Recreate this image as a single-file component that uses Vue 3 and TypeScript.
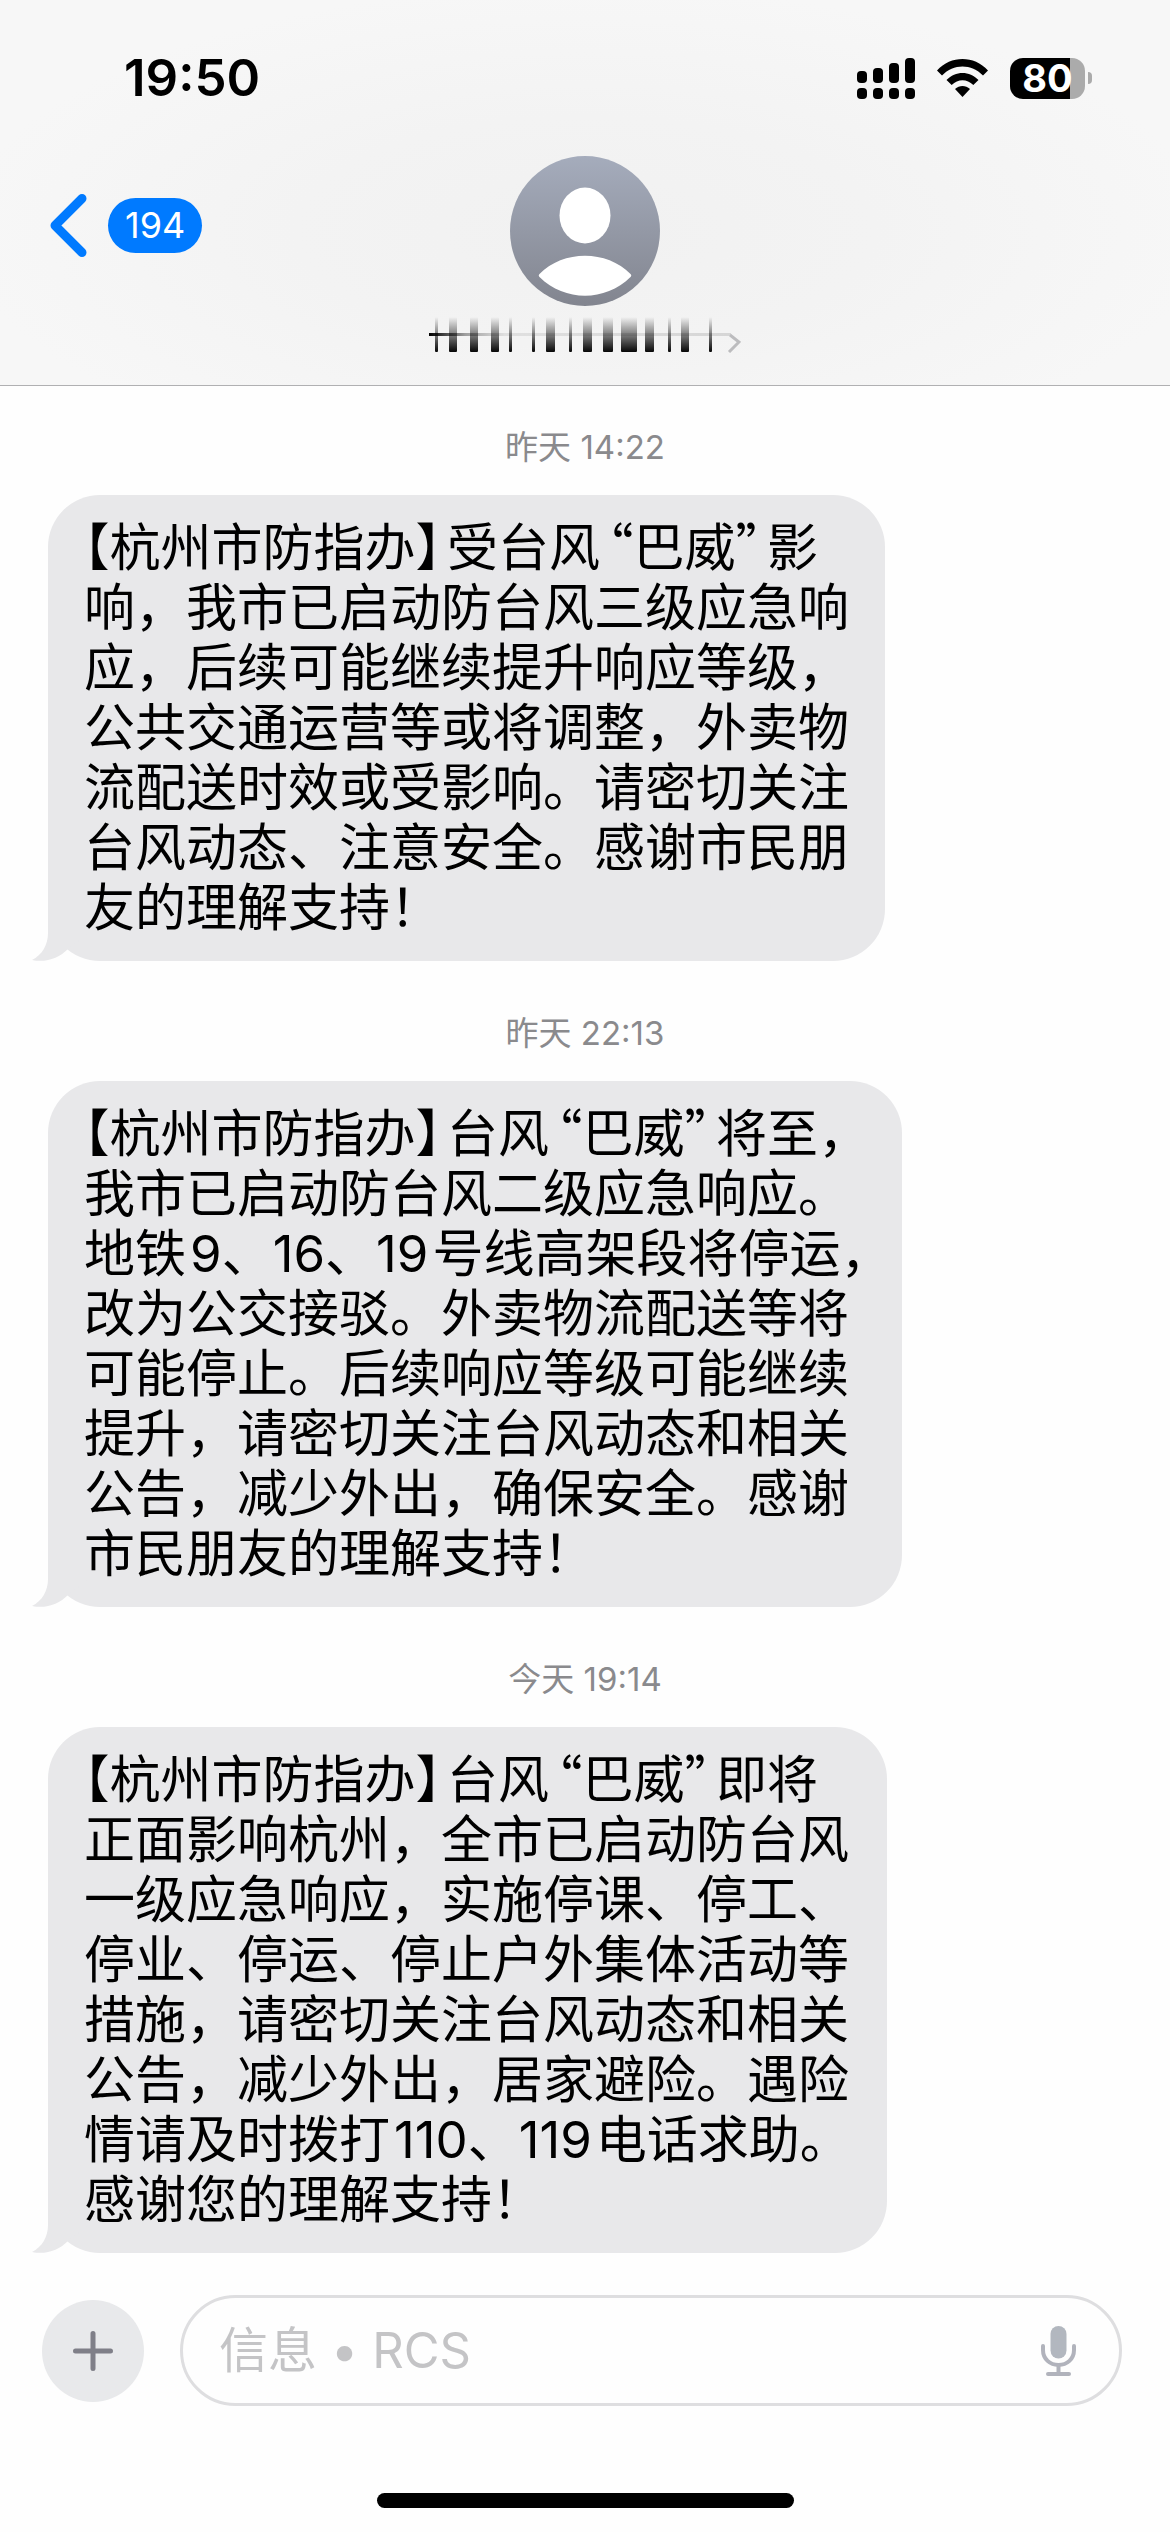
<script setup lang="ts">
interface Message {
  stamp: string
  lines: string[]
}

interface Token {
  text: string
  kind: string
}

const messages: Message[] = [
  {
    stamp: '昨天 14:22',
    lines: [
      '【杭州市防指办】受台风“巴威”影',
      '响，我市已启动防台风三级应急响',
      '应，后续可能继续提升响应等级，',
      '公共交通运营等或将调整，外卖物',
      '流配送时效或受影响。请密切关注',
      '台风动态、注意安全。感谢市民朋',
      '友的理解支持！',
    ],
  },
  {
    stamp: '昨天 22:13',
    lines: [
      '【杭州市防指办】台风“巴威”将至，',
      '我市已启动防台风二级应急响应。',
      '地铁9、16、19号线高架段将停运，',
      '改为公交接驳。外卖物流配送等将',
      '可能停止。后续响应等级可能继续',
      '提升，请密切关注台风动态和相关',
      '公告，减少外出，确保安全。感谢',
      '市民朋友的理解支持！',
    ],
  },
  {
    stamp: '今天 19:14',
    lines: [
      '【杭州市防指办】台风“巴威”即将',
      '正面影响杭州，全市已启动防台风',
      '一级应急响应，实施停课、停工、',
      '停业、停运、停止户外集体活动等',
      '措施，请密切关注台风动态和相关',
      '公告，减少外出，居家避险。遇险',
      '情请及时拨打110、119电话求助。',
      '感谢您的理解支持！',
    ],
  },
]

const kinds: Record<string, string> = {
  '【': 'half',
  '】': 'half close',
  '“': 'half quote open-quote',
  '”': 'half quote close',
  '，': 'half',
}

// Splits a line so that brackets, quotes and digits get their own spacing beside Chinese characters.
function tokenize(line: string): Token[] {
  const parts = line.split(/(【|】|“|”|\d+|，$)/).filter((part) => part !== '')
  return parts.map((text, i) => {
    if (kinds[text]) return { text, kind: kinds[text] }
    if (/^\d+$/.test(text)) {
      const before = i > 0 && !/[、，。]$/.test(parts[i - 1])
      const after = i < parts.length - 1 && !/^[、，。]/.test(parts[i + 1])
      return { text, kind: [before ? 'gap-before' : '', after ? 'gap-after' : ''].join(' ').trim() }
    }
    return { text, kind: '' }
  })
}

const thread = messages.map((m) => ({ stamp: m.stamp, lines: m.lines.map(tokenize) }))

const signal = [
  { x: 0, y: 13 },
  { x: 16, y: 10 },
  { x: 32, y: 5 },
  { x: 48, y: 0 },
]

// x position and width of each stroke of the obscured contact name
const strokes: [number, number][] = [
  [6, 3], [20, 8], [41, 8], [62, 8], [80, 3], [103, 3], [117, 9], [140, 3],
  [154, 9], [174, 10], [192, 16], [216, 9], [239, 3], [252, 8], [280, 3],
]
</script>

<template>
  <div class="page" lang="zh-CN">
    <header class="header">
      <div class="status">
        <time class="clock">19:50</time>
        <div class="indicators">
          <svg class="signal" viewBox="0 0 58 41" width="58" height="41" aria-hidden="true">
            <g v-for="bar in signal" :key="bar.x">
              <rect :x="bar.x" :y="bar.y" width="10" :height="25 - bar.y" rx="4" />
              <rect :x="bar.x" y="30" width="10" height="11" rx="4" />
            </g>
          </svg>
          <svg class="wifi" viewBox="0 0 51 38" width="51" height="38" aria-hidden="true">
            <path d="M0 11.5C14-3.8 37-3.8 51 11.5L46 16.500C34.500 4.500 16.500 4.500 5 16.500Z" />
            <path d="M9.500 21C18.500 11.500 32.500 11.500 41.500 21L36.300 26C30 19.500 21 19.500 14.700 26Z" />
            <path d="M18 30C22.500 26 28.500 26 33 30L25.500 38Z" />
          </svg>
          <div class="battery">
            <span class="cell">80</span>
            <span class="nub"></span>
          </div>
        </div>
      </div>
      <nav class="nav">
        <button class="back" type="button" aria-label="返回">
          <svg viewBox="0 0 37 63" width="37" height="63" aria-hidden="true">
            <path d="M32 4.500L5 31.500L32 58.500" fill="none" stroke="#007aff" stroke-width="9" stroke-linecap="round" stroke-linejoin="round" />
          </svg>
          <span class="unread">194</span>
        </button>
        <button class="contact" type="button" aria-label="联系人">
          <svg viewBox="0 0 150 150" width="150" height="150" aria-hidden="true">
            <defs>
              <linearGradient id="avatar" x1="0" y1="0" x2="0" y2="1">
                <stop offset="0" stop-color="#a5acbc" />
                <stop offset="1" stop-color="#82858f" />
              </linearGradient>
            </defs>
            <circle cx="75" cy="75" r="75" fill="url(#avatar)" />
            <ellipse cx="75" cy="59.500" rx="25.500" ry="28" fill="#fff" />
            <path d="M29.500 118C53 93.500 97 93.500 120.500 118Q122 119.500 120.500 121C95 146 55 146 29.500 121Q28 119.500 29.500 118Z" fill="#fff" />
          </svg>
          <svg class="name" viewBox="0 0 312 36" width="312" height="36" aria-hidden="true">
            <defs>
              <linearGradient id="stroke" gradientUnits="userSpaceOnUse" x1="0" y1="0" x2="0" y2="36">
                <stop offset="0" stop-color="#000" stop-opacity="0" />
                <stop offset="0.300" stop-color="#000" stop-opacity="0.300" />
                <stop offset="0.650" stop-color="#000" stop-opacity="0.650" />
                <stop offset="1" stop-color="#000" />
              </linearGradient>
              <linearGradient id="rule">
                <stop offset="0" stop-color="#000" />
                <stop offset="0.120" stop-color="#000" stop-opacity="0.350" />
                <stop offset="0.250" stop-color="#000" stop-opacity="0.080" />
                <stop offset="1" stop-color="#000" stop-opacity="0.120" />
              </linearGradient>
            </defs>
            <rect x="0" y="16" width="302" height="3" fill="url(#rule)" />
            <rect v-for="[x, w] in strokes" :key="x" :x="x" y="0" :width="w" height="35" rx="1" fill="url(#stroke)" />
            <path d="M301 18L310 25L300 35" fill="none" stroke="#bcbcbe" stroke-width="3" />
          </svg>
        </button>
      </nav>
    </header>

    <main class="thread">
      <section v-for="message in thread" :key="message.stamp" class="group">
        <time class="stamp">{{ message.stamp }}</time>
        <div class="bubble">
          <p v-for="(line, i) in message.lines" :key="i" class="line"><span v-for="(token, j) in line" :key="j" :class="token.kind">{{ token.text }}</span></p>
          <svg class="tail" viewBox="0 0 60 60" width="60" height="60" aria-hidden="true">
            <path d="M16 0V32C16 44 10 54 0 59C14 62 27 57 36 48L60 30V0Z" fill="#e8e8ea" />
          </svg>
        </div>
      </section>
    </main>

    <footer class="footer">
      <form class="composer" @submit.prevent>
        <button class="add" type="button" aria-label="添加">
          <svg viewBox="0 0 40 40" width="40" height="40" aria-hidden="true">
            <path d="M20 2.500V37.500M2.500 20H37.500" stroke="#7f7f88" stroke-width="5" stroke-linecap="round" />
          </svg>
        </button>
        <div class="field">
          <input class="input" type="text" placeholder="信息 • RCS" aria-label="信息" />
          <button class="mic" type="button" aria-label="听写">
            <svg viewBox="0 0 35 50" width="35" height="50" aria-hidden="true">
              <rect x="9.500" y="0" width="16" height="32.500" rx="8" fill="#b2b7bf" />
              <path d="M2 20V24C2 33 9 39 17.500 39S33 33 33 24V20M17.500 39V47M7 48H28" fill="none" stroke="#b1b3bc" stroke-width="4" stroke-linecap="round" />
            </svg>
          </button>
        </div>
      </form>
      <div class="home"></div>
    </footer>
  </div>
</template>

<style>
body {
  margin: 0;
  background: #fefefe;
}
</style>

<style scoped>
.page {
  display: flex;
  flex-direction: column;
  min-height: 100vh;
  background: #fefefe;
  color: #000;
  font-family: Inter, "Noto Sans CJK SC", sans-serif;
}

button {
  padding: 0;
  border: 0;
  background: none;
  font: inherit;
}

svg {
  display: block;
}

.header {
  border-bottom: 1px solid #b0b0b2;
  background: radial-gradient(ellipse at 50% 60%, #f1f1f1 0%, #f3f3f3 35%, #f7f7f7 75%);
}

.status {
  display: flex;
  align-items: center;
  justify-content: space-between;
  height: 156px;
  padding: 0 78px 0 124px;
}

.clock {
  font-size: 51px;
  font-weight: 600;
  line-height: 60px;
}

.indicators {
  display: flex;
  align-items: center;
  gap: 22px;
}

.battery {
  display: flex;
  align-items: center;
  gap: 3px;
}

.cell {
  width: 75px;
  border-radius: 13px;
  background: linear-gradient(to right, #000 80%, #ababab 80%);
  color: #fff;
  font-size: 38px;
  font-weight: 700;
  line-height: 41px;
  text-align: center;
}

.nub {
  width: 4px;
  height: 12px;
  border-radius: 0 4px 4px 0;
  background: #ababab;
}

.nav {
  display: grid;
  grid-template-columns: 1fr auto 1fr;
  align-items: start;
  padding: 0 50px 32px;
}

.back {
  display: flex;
  align-items: center;
  justify-self: start;
  gap: 21px;
  margin-top: 38px;
}

.unread {
  padding: 0 17px;
  border-radius: 28px;
  background: #007aff;
  color: #fff;
  font-size: 36px;
  line-height: 55px;
}

.contact {
  display: flex;
  flex-direction: column;
  align-items: center;
  gap: 11px;
}

.thread {
  display: flex;
  flex: 1;
  flex-direction: column;
  gap: 52px;
  padding: 41px 48px 42px;
}

.group {
  display: flex;
  flex-direction: column;
  align-items: flex-start;
  gap: 28px;
}

.stamp {
  align-self: center;
  color: #8a8a8d;
  font-size: 33px;
  line-height: 40px;
}

.bubble {
  position: relative;
  padding: 23px 36px;
  border-radius: 52px;
  background: #e8e8ea;
}

.tail {
  position: absolute;
  bottom: 0;
  left: -16px;
}

.line {
  position: relative;
  z-index: 1;
  margin: 0;
  font-size: 51px;
  line-height: 60px;
  white-space: nowrap;
}

.half {
  font-feature-settings: "halt";
}

.quote {
  font-family: "Noto Sans CJK SC", sans-serif;
  line-height: 1;
}

.open-quote {
  margin-left: 8px;
}

.close {
  margin-right: 6px;
}

.gap-before {
  margin-left: 4px;
}

.gap-after {
  margin-right: 4px;
}

.footer {
  display: flex;
  flex-direction: column;
  gap: 87px;
  padding-bottom: 24px;
}

.composer {
  display: flex;
  align-items: center;
  gap: 36px;
  padding: 0 48px 0 42px;
}

.add {
  display: flex;
  align-items: center;
  justify-content: center;
  width: 102px;
  height: 102px;
  border-radius: 50%;
  background: #e8e9eb;
}

.field {
  display: flex;
  flex: 1;
  align-items: center;
  box-sizing: border-box;
  height: 111px;
  padding: 0 43px 0 36px;
  border: 3px solid #dedee0;
  border-radius: 56px;
}

.input {
  flex: 1;
  min-width: 0;
  padding: 0;
  border: 0;
  outline: 0;
  background: none;
  color: #000;
  font: inherit;
  font-size: 49px;
  line-height: 60px;
}

.input::placeholder {
  color: #c4c4c6;
  opacity: 1;
}

.home {
  align-self: center;
  width: 417px;
  height: 15px;
  border-radius: 8px;
  background: #000;
}
</style>
